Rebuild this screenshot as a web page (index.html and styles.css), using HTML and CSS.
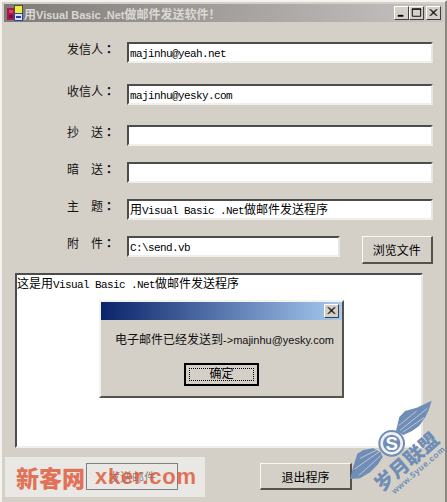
FILE: index.html
```html
<!DOCTYPE html>
<html lang="en">
<head>
    <meta charset="UTF-8">
    <title>用Visual Basic .Net做邮件发送软件！</title>
    <link rel="stylesheet" href="styles.css">
</head>
<body>
    <div class="window">
        <div class="title-bar">
            <svg class="app-icon" width="17" height="17" viewBox="0 0 17 17">
                <rect x="0" y="3" width="8" height="12" fill="#a81848"/>
                <rect x="2" y="5" width="4" height="3" fill="#d84070"/>
                <rect x="2" y="10" width="4" height="3" fill="#701040"/>
                <rect x="7.5" y="0.5" width="8" height="8" fill="#ecec3c" stroke="#50503a"/>
                <rect x="7.5" y="8.5" width="8" height="7" fill="#d8e4f4" stroke="#28489c"/>
                <rect x="9" y="11" width="5" height="2" fill="#2040b0"/>
            </svg>
            <span class="title-text"><span class="cjk">用</span>Visual Basic .Net<span class="cjk">做邮件发送软件！</span></span>
            <div class="caption-buttons">
                <div class="caption-btn"><svg width="14" height="12" viewBox="0 0 14 12"><rect x="3" y="8" width="6" height="2" fill="#000"/></svg></div>
                <div class="caption-btn"><svg width="14" height="12" viewBox="0 0 14 12"><path d="M2.5 1.5h9v8h-9z M2 2h10" fill="none" stroke="#000"/></svg></div>
                <div class="caption-btn close-gap"><svg width="14" height="12" viewBox="0 0 14 12"><path d="M3 2l7 7M4 2l7 7M10 2l-7 7M11 2l-7 7" fill="none" stroke="#000"/></svg></div>
            </div>
        </div>

        <div class="form">
            <div class="label">发信人<span class="colon">：</span></div>
            <div class="field"><span class="mono">majinhu@yeah.net</span></div>
            <div class="label">收信人<span class="colon">：</span></div>
            <div class="field"><span class="mono">majinhu@yesky.com</span></div>
            <div class="label">抄　送<span class="colon">：</span></div>
            <div class="field"></div>
            <div class="label">暗　送<span class="colon">：</span></div>
            <div class="field"></div>
            <div class="label">主　题<span class="colon">：</span></div>
            <div class="field"><span class="cjk">用</span><span class="mono">Visual Basic .Net</span><span class="cjk">做邮件发送程序</span></div>
            <div class="label">附　件<span class="colon">：</span></div>
            <div class="attach-row">
                <div class="field attach-field"><span class="mono">C:\send.vb</span></div>
                <div class="btn browse-btn">浏览文件</div>
            </div>
        </div>

        <div class="field message-box"><span class="cjk">这是用</span><span class="mono">Visual Basic .Net</span><span class="cjk">做邮件发送程序</span></div>

        <div class="bottom-row">
            <div class="btn action-btn send-btn">发送邮件</div>
            <div class="btn action-btn">退出程序</div>
        </div>

        <div class="dialog">
            <div class="dialog-title">
                <div class="caption-btn"><svg width="14" height="12" viewBox="0 0 14 12"><path d="M3 2l7 7M4 2l7 7M10 2l-7 7M11 2l-7 7" fill="none" stroke="#000"/></svg></div>
            </div>
            <div class="dialog-msg"><span class="cjk">电子邮件已经发送到</span>-&gt;majinhu@yesky.com</div>
            <div class="ok-btn"><div class="ok-inner">确定</div></div>
        </div>

        <div class="stamp-left"><span class="stamp-cn">新客网</span><span class="stamp-en">xker.com</span></div>

        <svg class="stamp-right" width="97" height="107" viewBox="0 0 291 321">
            <path class="wing" d="M138 108 L148 66 L165 48 L200 38 L245 17 L236 46 L226 66 L208 92 L186 108 L160 120 Z"/>
            <path class="wing" d="M92 172 L70 160 L40 165 L22 176 L10 214 L0 252 L30 250 L60 232 L84 208 L98 186 Z"/>
            <path class="feather" d="M150 106 L232 40 M158 112 L222 68 M146 92 L200 48 M88 170 L14 222 M92 182 L26 242 M80 165 L30 190"/>
            <circle cx="125" cy="145" r="37" fill="#eef0f2" stroke="#6f8db5" stroke-width="6"/>
            <circle cx="125" cy="145" r="26" fill="#6f8db5"/>
            <text class="logo-s" x="125" y="165" text-anchor="middle">S</text>
            <text class="logo-cn" transform="translate(96 292) rotate(-41)">岁月联盟</text>
            <text class="logo-url" transform="translate(134 298) rotate(-41)">www.5yue.com</text>
        </svg>
    </div>
</body>
</html>
```

FILE: styles.css
```css
body {
    margin: 0;
    overflow: hidden;
}
.window {
    position: relative;
    box-sizing: border-box;
    width: 447px;
    height: 502px;
    padding: 2px 2px 0 2px;
    background-color: #D4D0C8;
    border-top: 2px solid #F4F3F0;
    border-left: 2px solid #F4F3F0;
    border-right: 2px solid #8A8780;
    overflow: hidden;
    font-family: "Liberation Sans", "Noto Sans CJK SC", sans-serif;
}
.cjk {
    font-family: "Noto Sans CJK SC", sans-serif;
    font-size: 12px;
}
.mono {
    font-family: "Liberation Mono", monospace;
    font-size: 11px;
    letter-spacing: -0.6px;
}

/* title bar */
.title-bar {
    display: flex;
    align-items: center;
    height: 18px;
    background: linear-gradient(to right, #7F7B78, #C6C3C2);
    color: #DAD8D4;
}
.app-icon {
    margin-left: 3px;
}
.title-text {
    font-size: 11px;
    font-weight: bold;
}
.title-text .cjk {
    font-weight: bold;
}
.caption-buttons {
    display: flex;
    margin-left: auto;
    margin-right: 2px;
}
.caption-btn {
    display: flex;
    box-sizing: border-box;
    width: 15px;
    height: 14px;
    align-items: center;
    justify-content: center;
    background-color: #D4D0C8;
    border-top: 1px solid #fff;
    border-left: 1px solid #fff;
    border-right: 1px solid #404040;
    border-bottom: 1px solid #404040;
}
.close-gap {
    margin-left: 2px;
}

/* form */
.form {
    display: grid;
    grid-template-columns: 60px 306px;
    grid-template-rows: 42px 41px 37px 37px 37px auto;
    margin-top: 20px;
    padding-left: 63px;
    height: 220px;
}
.label {
    font-family: "Noto Sans CJK SC", sans-serif;
    font-size: 12px;
    line-height: 14px;
    color: #111;
}
.colon {
    font-family: "Noto Sans CJK TC", sans-serif;
    font-weight: bold;
}
.field {
    box-sizing: border-box;
    height: 21px;
    padding-left: 1px;
    line-height: 15px;
    background-color: #fff;
    color: #000;
    border-top: 2px solid #4C4C4C;
    border-left: 2px solid #4C4C4C;
    border-right: 2px solid #E8E6E2;
    border-bottom: 2px solid #F0EFEC;
    white-space: nowrap;
}
.attach-row {
    display: flex;
    align-items: flex-start;
}
.attach-field {
    width: 214px;
}
.btn {
    display: flex;
    box-sizing: border-box;
    align-items: center;
    justify-content: center;
    font-family: "Noto Sans CJK SC", sans-serif;
    font-size: 12px;
    color: #000;
    background-color: #D4D0C8;
    border-top: 1px solid #F8F8F6;
    border-left: 1px solid #F8F8F6;
    border-right: 2px solid #55524C;
    border-bottom: 2px solid #55524C;
}
.browse-btn {
    width: 72px;
    height: 28px;
    margin-left: 22px;
}
.message-box {
    width: 408px;
    height: 175px;
    margin-left: 11px;
    margin-top: 11px;
    padding-left: 0;
}
.bottom-row {
    display: flex;
    margin-top: 15px;
    padding-left: 82px;
    gap: 82px;
}
.action-btn {
    width: 92px;
    height: 27px;
}
.send-btn {
    border: 1px solid #000;
}

/* message dialog, sits over the form */
.dialog {
    position: absolute;
    left: 97px;
    top: 298px;
    box-sizing: border-box;
    width: 245px;
    height: 98px;
    background-color: #D4D0C8;
    border-top: 2px solid #F4F3F0;
    border-left: 2px solid #F4F3F0;
    border-right: 2px solid #55524C;
    border-bottom: 2px solid #55524C;
    display: flex;
    flex-direction: column;
    align-items: center;
}
.dialog-title {
    display: flex;
    align-self: stretch;
    align-items: center;
    justify-content: flex-end;
    height: 18px;
    padding-right: 3px;
    background: linear-gradient(to right, #0A246A, #A6CAF0);
}
.dialog-msg {
    margin-top: 11px;
    padding-left: 6px;
    font-size: 11px;
    line-height: 16px;
    color: #111;
    white-space: nowrap;
}
.ok-btn {
    box-sizing: border-box;
    width: 75px;
    height: 23px;
    margin-top: 15px;
    padding: 3px;
    border: 2px solid #000;
    background-color: #D4D0C8;
}
.ok-inner {
    height: 100%;
    box-sizing: border-box;
    border: 1px dotted #000;
    text-align: center;
    font-size: 12px;
    line-height: 11px;
    color: #000;
}

/* watermarks laid over the screenshot */
.stamp-left {
    position: absolute;
    left: 3px;
    top: 455px;
    display: flex;
    align-items: center;
    box-sizing: border-box;
    width: 200px;
    height: 40px;
    padding-left: 11px;
    background-color: rgba(255, 255, 255, 0.5);
    color: rgba(224, 92, 62, 0.85);
    font-weight: bold;
    white-space: nowrap;
}
.stamp-cn {
    font-family: "Noto Sans CJK SC", sans-serif;
    font-size: 23px;
    font-weight: 900;
}
.stamp-en {
    margin-left: 10px;
    font-size: 22px;
    letter-spacing: 0.8px;
}
.stamp-right {
    position: absolute;
    left: 348px;
    top: 393px;
}
.wing {
    fill: #6f8db5;
}
.feather {
    fill: none;
    stroke: #dfe5ec;
    stroke-width: 2;
}
.logo-s {
    font-family: "Liberation Sans", sans-serif;
    font-size: 56px;
    font-weight: bold;
    fill: #fff;
}
.logo-cn {
    font-family: "Noto Sans CJK SC", sans-serif;
    font-size: 58px;
    font-weight: 900;
    fill: #6f8db5;
}
.logo-url {
    font-family: "Liberation Sans", sans-serif;
    font-size: 25px;
    font-weight: bold;
    letter-spacing: 2px;
    fill: #6f8db5;
}
```
